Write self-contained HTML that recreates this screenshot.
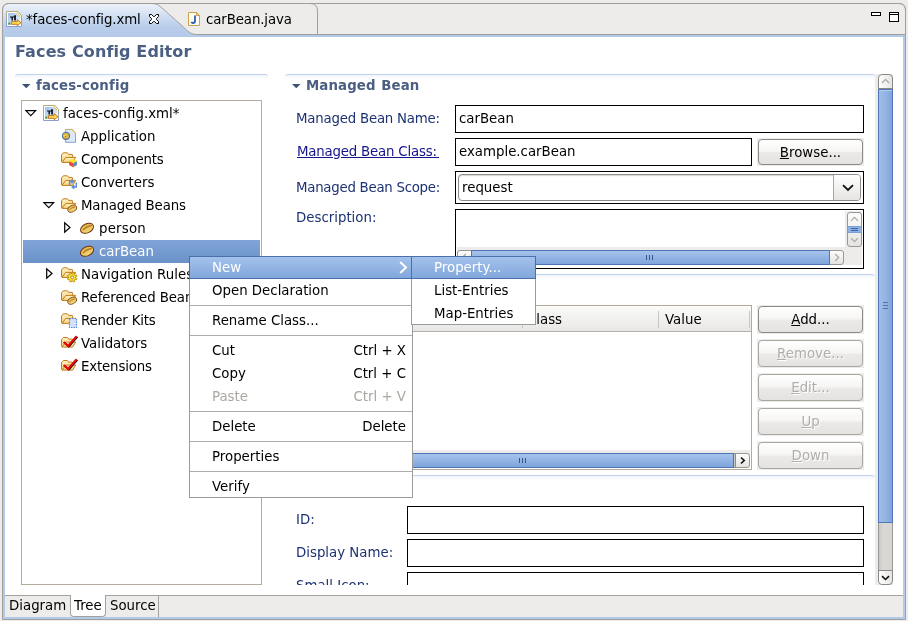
<!DOCTYPE html>
<html lang="en">
<head>
<meta charset="utf-8">
<title>Faces Config Editor</title>
<style>
html,body{margin:0;padding:0;}
body{width:908px;height:621px;overflow:hidden;background:#edeceb;position:relative;
  font-family:"DejaVu Sans","Liberation Sans",sans-serif;font-size:13.33px;color:#000;line-height:16px;}
.abs{position:absolute;}
svg{position:absolute;overflow:visible;}
.t{position:absolute;white-space:nowrap;line-height:16px;height:16px;}
.b{font-weight:bold;color:#4a5f82;}
.lbl{color:#1d3273;}
.link{color:#14148c;text-decoration:underline;}
.field{position:absolute;box-sizing:border-box;border:1px solid #000;background:#fff;}
.btn{position:absolute;box-sizing:border-box;width:107px;height:29px;padding:1px;background:#edeceb;}
.btn>span{display:block;box-sizing:border-box;height:27px;border:1px solid #8d8983;border-radius:4px;
  background:linear-gradient(#ffffff 0%,#f6f5f4 48%,#ebeae8 52%,#e4e3e1 100%);text-align:center;line-height:26px;}
.btn.dis>span{color:#b1aea9;border-color:#a9a6a0;text-shadow:1px 1px 0 #fff;}
.sel{background:linear-gradient(#7fa4d7,#6b92c9);}
.msel{background:linear-gradient(#a3c1eb,#82a7dc);box-sizing:border-box;border:1px solid #4a70ab;}
.sep{position:absolute;height:1px;background:#ababaa;}
.gray{color:#aaa7a1;}
.sechdr{position:absolute;height:12px;border-top:1px solid #c2d2ec;border-radius:3px 3px 0 0;background:linear-gradient(#f3f6fc,#ffffff 5px);box-sizing:border-box;}
.sb{position:absolute;box-sizing:border-box;border:1px solid #9a9894;border-radius:3px;background:linear-gradient(#fdfdfd,#e4e3e1);}
.thumb{position:absolute;box-sizing:border-box;border:1px solid #4e76b4;}
</style>
</head>
<body>
<div id="root" style="position:absolute;left:0;top:0;width:908px;height:621px;will-change:transform;">

<!-- ======= editor frame ======= -->
<div class="abs" style="left:2px;top:3px;width:904px;height:617px;box-sizing:border-box;border:1px solid #a19f9b;border-radius:7px 7px 0 0;background:#b2c9ea;"></div>
<div class="abs" style="left:5px;top:37px;width:898px;height:558px;background:#fff;"></div>
<div class="abs" style="left:5px;top:595px;width:898px;height:22px;background:#edeceb;border-top:1px solid #a3a19c;box-sizing:border-box;"></div>

<!-- ======= top tab bar ======= -->
<svg style="left:0;top:0" width="908" height="38" viewBox="0 0 908 38">
  <defs>
    <linearGradient id="tabg" x1="0" y1="0" x2="0" y2="1">
      <stop offset="0" stop-color="#edf2fa"/>
      <stop offset="0.300" stop-color="#d6e2f3"/>
      <stop offset="0.550" stop-color="#c2d4ee"/>
      <stop offset="0.720" stop-color="#b7cce9"/>
      <stop offset="1" stop-color="#b5cae9"/>
    </linearGradient>
  </defs>
  <path d="M150,4 L899,4 Q905,4 905,10 L905,34 L186,34 Z" fill="#edeceb"/>
  <rect x="3" y="34.5" width="902" height="2.500" fill="#b2c9ea"/>
  <path d="M3,37 L3,10 Q3,4 9,4 L151,4 C156,4 158,5 161,7.700 L183,27.100 C187,30.700 190,35 197,35 L197,37 Z" fill="url(#tabg)"/>
  <path d="M2.5,37 L2.5,10 Q2.5,3.5 9,3.5 L899,3.5 Q905.5,3.5 905.5,10 L905.5,37" fill="none" stroke="#a19f9b"/>
  <path d="M151,3.5 C156,3.5 158,4.500 161,7.200 L183,26.600 C187,30.200 190,34.5 197,34.5 L905,34.5" fill="none" stroke="#a19f9b"/>
  <path d="M310,3.5 Q317.5,3.5 317.5,11 L317.5,34" fill="none" stroke="#a19f9b"/>
  <!-- close X -->
  <path d="M149.500,14.500 L151.500,14.500 L153.500,16.500 L154.500,16.500 L156.500,14.500 L158.500,14.500 L158.500,16.500 L156.500,18.500 L156.500,19.500 L158.500,21.500 L158.500,23.500 L156.500,23.500 L154.500,21.500 L153.500,21.500 L151.500,23.500 L149.500,23.500 L149.500,21.500 L151.500,19.500 L151.500,18.500 L149.500,16.500 Z" fill="#fff" stroke="#000" stroke-width="1"/>
  <!-- min / max -->
  <rect x="871.500" y="12.500" width="9" height="3" fill="#fff" stroke="#000"/>
  <rect x="889.500" y="12.500" width="9" height="9" fill="#fff" stroke="#000"/>
  <path d="M889.500,14.500 L898.500,14.500" stroke="#000"/>
</svg>

<svg width="0" height="0" style="left:0;top:0">
 <defs>
  <linearGradient id="fold" x1="0" y1="0" x2="0" y2="1"><stop offset="0" stop-color="#fdf2c6"/><stop offset="1" stop-color="#f4cf78"/></linearGradient>
  <linearGradient id="pgo" x1="0" y1="0" x2="0" y2="1"><stop offset="0" stop-color="#b9ab74"/><stop offset="1" stop-color="#8b9fca"/></linearGradient>
  <linearGradient id="pgi" x1="0" y1="0" x2="1" y2="1"><stop offset="0" stop-color="#9cc2ee"/><stop offset="1" stop-color="#f0f5fc"/></linearGradient>
  <radialGradient id="globe" cx="0.4" cy="0.35" r="0.7"><stop offset="0" stop-color="#fbe36a"/><stop offset="0.7" stop-color="#dba52a"/><stop offset="1" stop-color="#b98018"/></radialGradient>
  <linearGradient id="beang" x1="0" y1="0" x2="0" y2="1"><stop offset="0" stop-color="#e2b455"/><stop offset="1" stop-color="#f3d877"/></linearGradient>
  <g id="folder" transform="translate(0,0.900)">
    <path d="M0.500,10 L0.500,3 Q0.500,2.500 1.300,2.200 L1.900,1.300 Q2.200,0.900 3,0.900 L6,0.900 Q6.700,0.900 7,1.500 L7.500,2.500 L11,2.500 Q11.600,2.500 11.600,3.300 L11.600,5.500" fill="url(#fold)" stroke="#c27c1c"/>
    <path d="M1,10.500 L4.800,5.500 L14.700,5.500 L11.600,10.500 Z" fill="url(#fold)" stroke="#c27c1c" stroke-linejoin="round"/>
  </g>
  <g id="bean">
    <ellipse cx="0" cy="0" rx="6.900" ry="4.500" transform="rotate(-25)" fill="url(#beang)" stroke="#6f3410" stroke-width="1"/>
    <path d="M-3.800,1.400 Q-1,-1.800 4.200,-2.800" stroke="#b57d1e" stroke-width="1.300" fill="none" stroke-linecap="round"/>
  </g>
 </defs>
</svg>
<svg style="left:6px;top:11px" width="16" height="16" viewBox="0 0 16 16">
  <path d="M0.500,0.500 L12,0.500 L15.500,4.500 L15.500,15.500 L0.500,15.500 Z" fill="#fff" stroke="url(#pgo)"/>
  <path d="M2,2 L10.500,2 L14,6 L14,14 L2,14 Z" fill="url(#pgi)"/>
  <path d="M10.800,1.600 L14.600,6" stroke="#f2c555" stroke-width="1.600" stroke-dasharray="1.300 0.500"/>
  <path d="M4,5.500 h4.100 v-1.200 h1.800 v5.100 h-1.700 v-2.900 h-1.300 v2.900 h-1.400 v-2.900 h-1.500 z" fill="#0c0c14"/>
  <path d="M5.400,10.600 L11.200,10.600 L11.200,8.700 L15,11.700 L11.200,14.700 L11.200,13.300 L5.400,13.300 Z" fill="#ffe04f" stroke="#c46a12" stroke-width="0.900" stroke-linejoin="round"/>
  <rect x="2.300" y="11.600" width="1.900" height="2" fill="#3f9a2a"/>
</svg>
<div class="t" style="left:26px;top:12px;letter-spacing:-0.1px;">*faces-config.xml</div>
<svg style="left:188px;top:12px" width="13" height="14" viewBox="0 0 13 14">
  <path d="M0.500,0.500 L8.500,0.500 L11.500,3.500 L11.500,13.500 L0.500,13.500 Z" fill="#fffdf2" stroke="#c9a24e"/>
  <path d="M8.500,0.500 L8.500,3.500 L11.500,3.500 Z" fill="#f4dfa6" stroke="#c9a24e" stroke-linejoin="round"/>
  <path d="M7,3.500 L7,9 Q7,11 5,11 Q3.800,11 3.300,10" fill="none" stroke="#2f5fb0" stroke-width="1.800"/>
</svg>
<div class="t" style="left:206px;top:12px;letter-spacing:-0.1px;">carBean.java</div>
<div class="t b" style="left:15px;top:42px;font-size:16px;line-height:20px;height:20px;letter-spacing:0.12px;">Faces Config Editor</div>

<!-- ======= left section ======= -->
<div class="sechdr" style="left:15px;top:74px;width:253px;"></div>
<svg style="left:22px;top:84px" width="9" height="5" viewBox="0 0 9 5"><path d="M0,0 L8.500,0 L4.250,4.300 Z" fill="#3f5170"/></svg>
<div class="t b" style="left:36px;top:78px;letter-spacing:0.14px;">faces-config</div>
<div class="abs" style="left:21px;top:100px;width:241px;height:485px;box-sizing:border-box;border:1px solid #b3ac9a;background:#fff;"></div>
<svg style="left:25px;top:110px" width="12" height="8" viewBox="0 0 12 8"><path d="M0.900,0.600 L10.700,0.600 L5.800,5.600 Z" fill="#fff" stroke="#000" stroke-width="1.100" stroke-linejoin="miter"/></svg>
<svg style="left:43px;top:105px" width="16" height="16" viewBox="0 0 16 16">
  <path d="M0.500,0.500 L12,0.500 L15.500,4.500 L15.500,15.500 L0.500,15.500 Z" fill="#fff" stroke="url(#pgo)"/>
  <path d="M2,2 L10.500,2 L14,6 L14,14 L2,14 Z" fill="url(#pgi)"/>
  <path d="M10.800,1.600 L14.600,6" stroke="#f2c555" stroke-width="1.600" stroke-dasharray="1.300 0.500"/>
  <path d="M4,5.500 h4.100 v-1.200 h1.800 v5.100 h-1.700 v-2.900 h-1.300 v2.900 h-1.400 v-2.900 h-1.500 z" fill="#0c0c14"/>
  <path d="M5.400,10.600 L11.200,10.600 L11.200,8.700 L15,11.700 L11.200,14.700 L11.200,13.300 L5.400,13.300 Z" fill="#ffe04f" stroke="#c46a12" stroke-width="0.900" stroke-linejoin="round"/>
  <rect x="2.300" y="11.600" width="1.900" height="2" fill="#3f9a2a"/>
</svg>
<div class="t" style="left:63px;top:106px;">faces-config.xml*</div>
<svg style="left:61px;top:128px" width="16" height="16" viewBox="0 0 16 16">
  <path d="M4.400,1.400 L11.500,1.400 L14.500,4.800 L14.500,14.300 L4.400,14.300 Z" fill="#dce8fb" stroke="url(#pgo)"/>
  <path d="M11.300,1.800 L14.300,5.200" stroke="#f2c555" stroke-width="1.500" stroke-dasharray="1.300 0.500"/>
  <circle cx="5" cy="7.900" r="3.700" fill="url(#globe)" stroke="#3f6db6" stroke-width="1"/>
  <path d="M6.200,9.300 Q7.600,8.600 7.900,7.200 Q8,9.600 6.400,10.600 Z" fill="#b9dcf0"/>
  <path d="M3.800,6.200 l1,-0.600 M4.200,8.300 l0.900,0.300 M5.600,6.900 l0.600,0.500" stroke="#8a5a10" stroke-width="0.800"/>
</svg>
<div class="t" style="left:81px;top:129px;">Application</div>
<svg style="left:61px;top:151px" width="16" height="16" viewBox="0 0 16 16"><use href="#folder"/><path d="M12.100,7.900 L16,10 L16,14 L12.100,16.200 L8.200,14 L8.200,10 Z" fill="#ffe61c"/><path d="M8.200,10.300 L12.100,12.300 L12.100,16.200 L8.200,14 Z" fill="#e8493b"/><path d="M16,10.300 L12.100,12.300 L12.100,16.200 L16,14 Z" fill="#5b86d8"/></svg>
<div class="t" style="letter-spacing:-0.18px;left:81px;top:152px;">Components</div>
<svg style="left:61px;top:174px" width="16" height="16" viewBox="0 0 16 16"><use href="#folder"/><path d="M8.600,11.500 L8.600,7.400 L12,7.400 M10.400,5.600 L12.400,7.400 L10.400,9.200" fill="none" stroke="#5b8fe0" stroke-width="1.500"/><path d="M15.300,8.600 L15.300,13 L11.700,13 M13.200,11.200 L11.200,13 L13.200,14.800" fill="none" stroke="#5b8fe0" stroke-width="1.500"/></svg>
<div class="t" style="left:81px;top:175px;">Converters</div>
<svg style="left:43px;top:202px" width="12" height="8" viewBox="0 0 12 8"><path d="M0.900,0.600 L10.700,0.600 L5.800,5.600 Z" fill="#fff" stroke="#000" stroke-width="1.100" stroke-linejoin="miter"/></svg>
<svg style="left:61px;top:197px" width="16" height="16" viewBox="0 0 16 16"><use href="#folder"/><g transform="translate(11.200,11.700) scale(0.700)"><use href="#bean"/></g></svg>
<div class="t" style="letter-spacing:-0.13px;left:81px;top:198px;">Managed Beans</div>
<svg style="left:64px;top:222px" width="8" height="12" viewBox="0 0 8 12"><path d="M0.700,0.800 L0.700,10.200 L6,5.500 Z" fill="#fff" stroke="#000" stroke-width="1.200" stroke-linejoin="miter"/></svg>
<svg style="left:79px;top:220px" width="16" height="16" viewBox="0 0 16 16"><g transform="translate(8,8.300)"><use href="#bean"/></g></svg>
<div class="t" style="letter-spacing:0.2px;left:99px;top:221px;">person</div>
<div class="abs sel" style="left:23px;top:240px;width:237px;height:23px;"></div>
<svg style="left:79px;top:243px" width="16" height="16" viewBox="0 0 16 16"><g transform="translate(8,8.300)"><use href="#bean"/></g></svg>
<div class="t" style="color:#fff;left:99px;top:244px;">carBean</div>
<svg style="left:46px;top:268px" width="8" height="12" viewBox="0 0 8 12"><path d="M0.700,0.800 L0.700,10.200 L6,5.500 Z" fill="#fff" stroke="#000" stroke-width="1.200" stroke-linejoin="miter"/></svg>
<svg style="left:61px;top:266px" width="16" height="16" viewBox="0 0 16 16"><use href="#folder"/><g transform="translate(11.200,11.400)"><path d="M3.37,0.44 L4.67,1.12 L4.09,2.51 L2.70,2.07 L2.07,2.70 L2.51,4.09 L1.12,4.67 L0.44,3.37 L-0.44,3.37 L-1.12,4.67 L-2.51,4.09 L-2.07,2.70 L-2.70,2.07 L-4.09,2.51 L-4.67,1.12 L-3.37,0.44 L-3.37,-0.44 L-4.67,-1.12 L-4.09,-2.51 L-2.70,-2.07 L-2.07,-2.70 L-2.51,-4.09 L-1.12,-4.67 L-0.44,-3.37 L0.44,-3.37 L1.12,-4.67 L2.51,-4.09 L2.07,-2.70 L2.70,-2.07 L4.09,-2.51 L4.67,-1.12 L3.37,-0.44 Z" fill="#ffe93c" stroke="#b48c08" stroke-width="0.900" stroke-linejoin="round"/><circle r="1.500" fill="#ffffff" stroke="#9a7206" stroke-width="0.900"/><path d="M-3.300,-1.300 L-2.300,-0.600 M-3.200,1.500 L-2.300,0.900" stroke="#fff8b0" stroke-width="0.900"/></g></svg>
<div class="t" style="left:81px;top:267px;">Navigation Rules</div>
<svg style="left:61px;top:289px" width="16" height="16" viewBox="0 0 16 16"><use href="#folder"/><g transform="translate(11.200,11.700) scale(0.700)"><use href="#bean"/></g></svg>
<div class="t" style="letter-spacing:-0.1px;left:81px;top:290px;">Referenced Beans</div>
<svg style="left:61px;top:312px" width="16" height="16" viewBox="0 0 16 16"><use href="#folder"/><rect x="8.500" y="6.500" width="7" height="9" fill="#d3e2fa" stroke="#5f8ad8" stroke-width="1.200" stroke-dasharray="1.500 1"/></svg>
<div class="t" style="letter-spacing:-0.15px;left:81px;top:313px;">Render Kits</div>
<svg style="left:61px;top:334px" width="16" height="16" viewBox="0 0 16 16">
  <g transform="translate(0,1.700)"><use href="#folder"/></g>
  <path d="M3.500,8.600 L7.900,12.600 L16.400,2.900" fill="none" stroke="#0a0a0a" stroke-width="1.600"/>
  <path d="M2.600,8 L7,12 L15.600,2.200" fill="none" stroke="#f00808" stroke-width="2.100"/>
</svg>
<div class="t" style="left:81px;top:336px;">Validators</div>
<svg style="left:61px;top:357px" width="16" height="16" viewBox="0 0 16 16">
  <g transform="translate(0,1.700)"><use href="#folder"/></g>
  <path d="M3.500,8.600 L7.900,12.600 L16.400,2.900" fill="none" stroke="#0a0a0a" stroke-width="1.600"/>
  <path d="M2.600,8 L7,12 L15.600,2.200" fill="none" stroke="#f00808" stroke-width="2.100"/>
</svg>
<div class="t" style="letter-spacing:-0.16px;left:81px;top:359px;">Extensions</div>

<!-- ======= right side: Managed Bean section ======= -->
<div class="sechdr" style="left:285px;top:74px;width:590px;"></div>
<svg style="left:292px;top:84px" width="9" height="5" viewBox="0 0 9 5"><path d="M0,0 L8.500,0 L4.250,4.300 Z" fill="#3f5170"/></svg>
<div class="t b" style="left:306px;top:78px;letter-spacing:0.1px;word-spacing:1px;">Managed Bean</div>
<div class="t lbl" style="left:296px;top:111px;letter-spacing:-0.21px;">Managed Bean Name:</div>
<div class="field" style="left:455px;top:105px;width:409px;height:28px;"></div>
<div class="t" style="left:459px;top:111px;">carBean</div>
<div class="t link" style="left:297px;top:144px;letter-spacing:-0.19px;">Managed Bean Class:</div>
<div class="abs" style="left:436px;top:157px;width:3px;height:1px;background:#14148c;"></div>
<div class="field" style="left:455px;top:138px;width:297px;height:28px;"></div>
<div class="t" style="left:459px;top:144px;">example.carBean</div>
<div class="btn" style="left:757px;top:138px;height:28px;"><span style="height:26px;line-height:25px;"><u>B</u>rowse...</span></div>
<div class="t lbl" style="left:296px;top:180px;letter-spacing:-0.26px;">Managed Bean Scope:</div>
<div class="field" style="left:455px;top:171px;width:409px;height:33px;"></div>
<div class="abs" style="left:458px;top:174px;width:403px;height:27px;box-sizing:border-box;border:1px solid #8f8d89;border-radius:4px;background:#fff;box-shadow:inset 0 1px 1px #d8d6d2;"></div>
<div class="abs" style="left:833px;top:175px;width:27px;height:25px;box-sizing:border-box;border-left:1px solid #a9a7a2;border-radius:0 3px 3px 0;background:linear-gradient(#fefefe,#e6e5e3);"></div>
<svg style="left:842px;top:183.500px" width="12" height="8" viewBox="0 0 12 8"><path d="M1,1.200 L6,6 L11,1.200" fill="none" stroke="#111" stroke-width="1.800"/></svg>
<div class="t" style="left:462px;top:180px;">request</div>
<div class="t lbl" style="left:296px;top:210px;">Description:</div>
<div class="field" style="left:455px;top:209px;width:409px;height:60px;"></div>
<div class="abs" style="left:845px;top:211px;width:17px;height:54px;background:#edeceb;"></div>
<div class="abs" style="left:457px;top:247px;width:405px;height:18px;background:#edeceb;"></div>
<div class="sb" style="left:847px;top:212px;width:15px;height:35px;"></div>
<svg style="left:850px;top:216px" width="9" height="6" viewBox="0 0 9 6"><path d="M1,4.800 L4.500,1.300 L8,4.800" fill="none" stroke="#aaa8a3" stroke-width="1.200"/></svg>
<div class="thumb" style="left:847px;top:226px;width:15px;height:7px;background:#8fb0e2;border-color:#7d9fd2;"></div>
<div class="abs" style="left:851px;top:228px;width:7px;height:1px;background:#3d64a4;"></div><div class="abs" style="left:851px;top:230px;width:7px;height:1px;background:#3d64a4;"></div>
<svg style="left:850px;top:237px" width="9" height="6" viewBox="0 0 9 6"><path d="M1,1.200 L4.500,4.700 L8,1.200" fill="none" stroke="#aaa8a3" stroke-width="1.200"/></svg>
<div class="sb" style="left:457px;top:250px;width:387px;height:15px;"></div>
<svg style="left:461px;top:253px" width="6" height="9" viewBox="0 0 6 9"><path d="M4.800,1 L1.300,4.500 L4.800,8" fill="none" stroke="#aaa8a3" stroke-width="1.200"/></svg>
<div class="thumb" style="left:471px;top:250px;width:359px;height:15px;background:linear-gradient(#a7c3ec,#7fa5dc);"></div>
<div class="abs" style="left:646px;top:255px;width:1px;height:5px;background:#34558f;"></div><div class="abs" style="left:649px;top:255px;width:1px;height:5px;background:#34558f;"></div><div class="abs" style="left:652px;top:255px;width:1px;height:5px;background:#34558f;"></div>
<svg style="left:834px;top:253px" width="6" height="9" viewBox="0 0 6 9"><path d="M1.200,1 L4.700,4.500 L1.200,8" fill="none" stroke="#aaa8a3" stroke-width="1.200"/></svg>

<!-- ======= section 2 (title hidden beneath menus) ======= -->
<div class="sechdr" style="left:285px;top:274px;width:590px;"></div>
<div class="abs" style="left:296px;top:305px;width:456px;height:165px;box-sizing:border-box;border:1px solid #b3ac9a;background:#fff;"></div>
<div class="abs" style="left:297px;top:306px;width:454px;height:26px;box-sizing:border-box;border-bottom:1px solid #b3b0ab;background:linear-gradient(#fbfbfa,#e8e7e5);"></div>
<div class="abs" style="left:522px;top:311px;width:1px;height:17px;background:#c9c7c2;"></div>
<div class="abs" style="left:658px;top:311px;width:1px;height:17px;background:#c9c7c2;"></div>
<div class="abs" style="left:749px;top:311px;width:1px;height:17px;background:#c9c7c2;"></div>
<div class="t" style="left:302px;top:312px;">Name</div>
<div class="t" style="left:527px;top:312px;">Class</div>
<div class="t" style="left:665px;top:312px;">Value</div>
<div class="abs" style="left:297px;top:450px;width:453px;height:18px;background:#edeceb;"></div>
<div class="sb" style="left:297px;top:453px;width:453px;height:15px;"></div>
<div class="thumb" style="left:311px;top:453px;width:423px;height:15px;background:linear-gradient(#a7c3ec,#7fa5dc);"></div>
<div class="abs" style="left:519px;top:458px;width:1px;height:5px;background:#34558f;"></div><div class="abs" style="left:522px;top:458px;width:1px;height:5px;background:#34558f;"></div><div class="abs" style="left:525px;top:458px;width:1px;height:5px;background:#34558f;"></div>
<div class="abs" style="left:734px;top:454px;width:1px;height:13px;background:#c9c8c5;"></div><div class="abs" style="left:735px;top:454px;width:1px;height:13px;background:#8f8d89;"></div>
<svg style="left:739.700px;top:457px" width="6" height="8" viewBox="0 0 6 8"><path d="M1,0.500 L4.200,3.500 L1,6.500" fill="none" stroke="#111" stroke-width="1.600"/></svg>
<div class="btn" style="left:757px;top:305px;"><span><u>A</u>dd...</span></div>
<div class="btn dis" style="left:757px;top:339px;"><span><u>R</u>emove...</span></div>
<div class="btn dis" style="left:757px;top:373px;"><span><u>E</u>dit...</span></div>
<div class="btn dis" style="left:757px;top:407px;"><span><u>U</u>p</span></div>
<div class="btn dis" style="left:757px;top:441px;"><span><u>D</u>own</span></div>

<!-- ======= section 3 ======= -->
<div class="sechdr" style="left:285px;top:475px;width:590px;"></div>
<div class="t lbl" style="left:296px;top:512px;">ID:</div>
<div class="field" style="left:407px;top:506px;width:457px;height:28px;"></div>
<div class="t lbl" style="left:296px;top:545px;">Display Name:</div>
<div class="field" style="left:407px;top:539px;width:457px;height:28px;"></div>
<div class="abs" style="left:290px;top:572px;width:580px;height:13px;overflow:hidden;"><div class="t lbl" style="left:6px;top:6px;">Small Icon:</div><div class="field" style="left:117px;top:0px;width:457px;height:28px;"></div></div>

<!-- ======= main scrollbar ======= -->
<div class="abs" style="left:875px;top:74px;width:18px;height:511px;background:#edeceb;"></div>
<div class="abs" style="left:878px;top:80px;width:15px;height:500px;background:linear-gradient(90deg,#c9c8c5,#d9d8d5 30%,#d6d5d2);border-left:1px solid #9a9894;border-right:1px solid #9a9894;box-sizing:border-box;"></div>
<div class="sb" style="left:878px;top:74px;width:15px;height:15px;border-radius:4px 4px 0 0;border-color:#8a8885;background:linear-gradient(90deg,#ffffff,#e6e5e3);"></div>
<svg style="left:881px;top:78px" width="9" height="6" viewBox="0 0 9 6"><path d="M1,5 L4.500,1.400 L8,5" fill="none" stroke="#a9a6a2" stroke-width="1.200"/></svg>
<div class="thumb" style="left:878px;top:89px;width:15px;height:434px;border-color:#5078b6;background:linear-gradient(90deg,#a0bdea,#94b4e4 50%,#7fa4da);box-shadow:inset 0 1px 0 #b5cbee;"></div>
<div class="abs" style="left:883px;top:302px;width:5px;height:1px;background:#4f74ae;"></div><div class="abs" style="left:883px;top:305px;width:5px;height:1px;background:#4f74ae;"></div><div class="abs" style="left:883px;top:308px;width:5px;height:1px;background:#4f74ae;"></div>
<div class="sb" style="left:878px;top:570px;width:15px;height:15px;border-radius:0 0 4px 4px;border-color:#8a8885;background:linear-gradient(90deg,#ffffff,#e6e5e3);"></div>
<svg style="left:881px;top:575px" width="9" height="6" viewBox="0 0 9 6"><path d="M1,1.200 L4.500,4.500 L8,1.200" fill="none" stroke="#111" stroke-width="1.600"/></svg>

<!-- ======= bottom tabs ======= -->
<div class="abs" style="left:70px;top:595px;width:36px;height:22px;box-sizing:border-box;border:1px solid #a3a19c;border-top:none;border-radius:0 0 4px 4px;background:#fff;"></div>
<div class="abs" style="left:158px;top:596px;width:1px;height:21px;background:#a3a19c;"></div>
<div class="t" style="left:9px;top:598px;">Diagram</div>
<div class="t" style="left:74px;top:598px;">Tree</div>
<div class="t" style="left:110px;top:598px;">Source</div>

<!-- ======= context menu ======= -->
<div class="abs" style="left:189px;top:256px;width:224px;height:242px;box-sizing:border-box;border:1px solid #9b9b9a;background:#fff;"></div>
<div class="abs msel" style="left:189px;top:256px;width:223px;height:23px;"></div>
<div class="t" style="left:212px;top:260px;color:#fff;">New</div>
<svg style="left:399px;top:261px" width="9" height="13" viewBox="0 0 9 13"><path d="M1.200,1 L7,6.500 L1.200,12" fill="none" stroke="#fff" stroke-width="2"/></svg>
<div class="t" style="left:212px;top:283px;">Open Declaration</div>
<div class="t" style="left:212px;top:313px;">Rename Class...</div>
<div class="t" style="left:212px;top:343px;">Cut</div><div class="t" style="right:502px;top:343px;">Ctrl + X</div>
<div class="t" style="left:212px;top:366px;">Copy</div><div class="t" style="right:502px;top:366px;">Ctrl + C</div>
<div class="t gray" style="left:212px;top:389px;">Paste</div><div class="t gray" style="right:502px;top:389px;">Ctrl + V</div>
<div class="t" style="left:212px;top:419px;">Delete</div><div class="t" style="right:502px;top:419px;">Delete</div>
<div class="t" style="left:212px;top:449px;">Properties</div>
<div class="t" style="left:212px;top:479px;">Verify</div>
<div class="sep" style="left:190px;top:305px;width:222px;"></div>
<div class="sep" style="left:190px;top:335px;width:222px;"></div>
<div class="sep" style="left:190px;top:411px;width:222px;"></div>
<div class="sep" style="left:190px;top:441px;width:222px;"></div>
<div class="sep" style="left:190px;top:471px;width:222px;"></div>

<!-- ======= submenu ======= -->
<div class="abs" style="left:411px;top:256px;width:125px;height:69px;box-sizing:border-box;border:1px solid #9b9b9a;background:#fff;"></div>
<div class="abs msel" style="left:411px;top:256px;width:125px;height:23px;"></div>
<div class="t" style="left:434px;top:260px;color:#fff;">Property...</div>
<div class="t" style="left:434px;top:283px;">List-Entries</div>
<div class="t" style="left:434px;top:306px;">Map-Entries</div>

</div>
</body>
</html>
